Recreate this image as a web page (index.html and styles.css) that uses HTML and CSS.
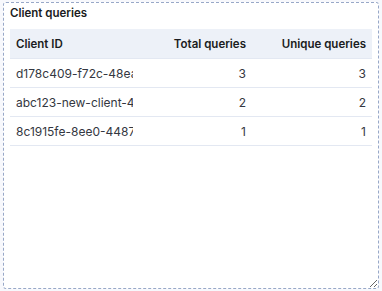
FILE: index.html
```html
<!DOCTYPE html>
<html>
<head>
<meta charset="utf-8">
<link rel="stylesheet" href="styles.css">
</head>
<body>
<div class="panel">
  <div class="title">Client queries</div>
  <table class="grid">
    <colgroup>
      <col class="c1"><col class="c2"><col class="c3">
    </colgroup>
    <thead>
      <tr><th class="left">Client ID</th><th>Total queries</th><th>Unique queries</th></tr>
    </thead>
    <tbody>
      <tr><td class="left"><div class="clip">d178c409-f72c-48ea-9f1b</div></td><td>3</td><td>3</td></tr>
      <tr><td class="left"><div class="clip">abc123-new-client-4567</div></td><td>2</td><td>2</td></tr>
      <tr><td class="left"><div class="clip">8c1915fe-8ee0-4487-b2c1</div></td><td>1</td><td>1</td></tr>
    </tbody>
  </table>
</div>
</body>
</html>
```
FILE: styles.css
```css
html, body {
  margin: 0;
  height: 100%;
  background: #f7f8fc;
}
body {
  padding: 2px 3px 3px 3px;
  box-sizing: border-box;
  font-family: Inter, "Noto Sans", sans-serif;
  color: #343741;
}
.panel {
  box-sizing: border-box;
  height: 287px;
  width: 376px;
  background: #ffffff;
  border: 1px dashed #98a8c8;
  border-radius: 3px;
  padding: 2px 6px 6px 6px;
  resize: both;
  overflow: hidden;
}
.title {
  font-size: 11.5px;
  font-weight: 600;
  line-height: 16px;
  color: #1a1c21;
  margin-bottom: 8px;
}
.grid {
  border-collapse: collapse;
  table-layout: fixed;
  width: 362px;
  font-size: 12px;
}
.c1 { width: 123px; }
.c2 { width: 119px; }
.c3 { width: 120px; }
.grid th {
  background: #edf1f8;
  height: 29px;
  padding: 0 6px;
  font-size: 11.5px;
  font-weight: 600;
  color: #1a1c21;
  text-align: right;
  border-bottom: 1px solid #e3e8f2;
}
.grid td {
  height: 28px;
  padding: 0 6px;
  text-align: right;
  border-bottom: 1px solid #e3e8f2;
  color: #343741;
}
.grid .left { text-align: left; }
.grid td.left { padding-right: 0; }
.clip {
  white-space: nowrap;
  overflow: hidden;
}
```
